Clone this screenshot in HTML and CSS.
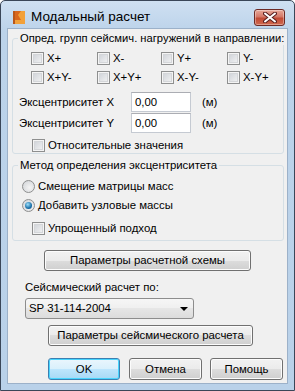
FILE: index.html
```html
<!DOCTYPE html>
<html lang="ru">
<head>
  <meta charset="UTF-8">
  <title>Модальный расчет</title>
  <link rel="stylesheet" href="styles.css">
</head>
<body>
  <div class="window">
    <div class="titlebar">
      <svg class="app-icon" width="14" height="15" viewBox="0 0 14 15">
        <polygon points="1,1 13,1 13,14 1,14" fill="#f2a13a"/>
        <polygon points="1,1 9,1 6,5 9,10 1,10" fill="#d9661c"/>
        <polygon points="1,1 3,1 3,14 1,14" fill="#b9561a"/>
      </svg>
      <span class="title">Модальный расчет</span>
      <div class="close">
        <svg width="14" height="11" viewBox="0 0 14 11">
          <path d="M2 1.5 L12 9.5 M12 1.5 L2 9.5" stroke="#5a2020" stroke-width="4" stroke-linecap="round"/>
          <path d="M2 1.5 L12 9.5 M12 1.5 L2 9.5" stroke="#fff" stroke-width="2" stroke-linecap="round"/>
        </svg>
      </div>
    </div>

    <div class="client">
      <fieldset class="group group-dir">
        <legend>Опред. групп сейсмич. нагружений в направлении:</legend>
        <div class="dir-grid">
          <label class="check"><span class="box"></span>X+</label>
          <label class="check"><span class="box"></span>X-</label>
          <label class="check"><span class="box"></span>Y+</label>
          <label class="check"><span class="box"></span>Y-</label>
          <label class="check"><span class="box"></span>X+Y-</label>
          <label class="check"><span class="box"></span>X+Y+</label>
          <label class="check"><span class="box"></span>X-Y-</label>
          <label class="check"><span class="box"></span>X-Y+</label>
        </div>
        <div class="ecc-row">
          <span class="ecc-label">Эксцентриситет X</span>
          <span class="field">0,00</span>
          <span class="unit">(м)</span>
        </div>
        <div class="ecc-row">
          <span class="ecc-label">Эксцентриситет Y</span>
          <span class="field">0,00</span>
          <span class="unit">(м)</span>
        </div>
        <label class="check check-rel"><span class="box"></span>Относительные значения</label>
      </fieldset>

      <fieldset class="group group-method">
        <legend>Метод определения эксцентриситета</legend>
        <label class="radio"><span class="circle"></span>Смещение матрицы масс</label>
        <label class="radio radio-2"><span class="circle on"></span>Добавить узловые массы</label>
        <label class="check check-simple"><span class="box"></span>Упрощенный подход</label>
      </fieldset>

      <div class="btn btn-scheme">Параметры расчетной схемы</div>
      <div class="combo-label">Сейсмический расчет по:</div>
      <div class="combo">SP 31-114-2004<span class="arrow"></span></div>
      <div class="btn btn-seismic">Параметры сейсмического расчета</div>

      <div class="footer">
        <div class="btn btn-ok">OK</div>
        <div class="btn btn-cancel">Отмена</div>
        <div class="btn btn-help">Помощь</div>
      </div>
    </div>
  </div>
</body>
</html>
```

FILE: styles.css
```css
* { box-sizing: border-box; }
body { margin: 0; font-family: "Liberation Sans", Arial, sans-serif; font-size: 11.4px; color: #000; background: #fff; }

.window { width: 295px; height: 391px; border: 1px solid #3a4658; border-radius: 5px 5px 0 0; background: linear-gradient(#cfe0f2, #bcd3ea 30px, #b9d1e9); display: flex; flex-direction: column; }

.titlebar { height: 27px; display: flex; align-items: flex-start; padding-left: 11px; }
.app-icon { margin-top: 9px; }
.title { margin-left: 5px; margin-top: 8px; font-size: 13.5px; line-height: 16px; color: #000; }
.close { margin-left: auto; margin-right: 9px; margin-top: 8px; width: 31px; height: 17px; border: 1px solid #6d2a25; border-radius: 3px; background: linear-gradient(#e8a899, #d47868 45%, #c14a35 55%, #d06a50); display: flex; align-items: center; justify-content: center; box-shadow: inset 0 0 0 1px rgba(255,255,255,0.35); }

.client { flex: 1; margin: 0 6px 6px; background: #f0f0f0; border: 1px solid #9cb1c9; }

.group { margin: 0 3px 0 4px; padding: 0; border: 1px solid #d5dfe5; border-radius: 3px; min-width: 0; }
.group legend { margin-left: 5px; padding: 0 2px; line-height: 13px; height: 13px; white-space: nowrap; }
.group-dir legend { font-size: 11.2px; }
.group-dir { margin-top: 3px; padding-bottom: 1px; }
.group-method { margin-top: 5px; padding-bottom: 5px; }

.check, .radio { display: flex; align-items: center; height: 13px; line-height: 13px; white-space: nowrap; }
.box { width: 13px; height: 13px; margin-right: 3px; border: 1px solid #8e8f8f; background: linear-gradient(135deg, #cbcfd5, #f6f6f6); box-shadow: inset 0 0 0 1px #f4f4f4, inset 0 0 0 2px #d4d6d9; }
.circle { width: 13px; height: 13px; margin-right: 3px; border: 1px solid #8e8f8f; border-radius: 50%; background: radial-gradient(circle at 60% 60%, #f4f4f4, #cfd2d6); position: relative; }
.circle.on::after { content: ""; position: absolute; left: 2px; top: 2px; width: 7px; height: 7px; border-radius: 50%; background: radial-gradient(circle at 40% 35%, #9ee0fb, #1a6fa8 60%, #0d4e82); }

.dir-grid { display: grid; grid-template-columns: 66px 64px 66px auto; row-gap: 6px; margin: 7px 0 0 18px; }

.ecc-row { display: flex; align-items: center; height: 20px; margin-left: 6px; }
.ecc-row + .ecc-row { margin-top: 1px; }
.group-dir .dir-grid + .ecc-row { margin-top: 8px; }
.ecc-label { width: 112px; }
.field { width: 60px; height: 20px; line-height: 18px; padding-left: 3px; background: #fff; border: 1px solid #c5cad2; border-top-color: #abadb3; }
.unit { margin-left: 11px; }
.check-rel { margin: 6px 0 0 19px; }

.radio { margin: 8px 0 0 9px; }
.radio-2 { margin-top: 6px; }
.radio .circle { margin-right: 3px; }
.check-simple { margin: 10px 0 0 19px; }

.btn { height: 21px; line-height: 19px; text-align: center; border: 1px solid #707070; border-radius: 3px; background: linear-gradient(#f2f2f2, #ebebeb 50%, #dddddd 50%, #cfcfcf); box-shadow: inset 0 0 0 1px #fcfcfc; }
.btn-scheme { margin: 9px 0 0 36px; width: 207px; }
.combo-label { margin: 10px 0 0 17px; line-height: 13px; }
.combo { margin: 4px 0 0 17px; width: 169px; height: 21px; line-height: 19px; padding-left: 3px; border: 1px solid #8d8d8d; border-radius: 3px; background: linear-gradient(#f6f6f6, #efefef 50%, #e6e6e6 50%, #dcdcdc); display: flex; align-items: center; }
.arrow { margin-left: auto; margin-right: 5px; width: 0; height: 0; border-left: 4px solid transparent; border-right: 4px solid transparent; border-top: 4px solid #000; }
.btn-seismic { margin: 6px 0 0 40px; width: 205px; }

.footer { display: flex; margin: 12px 0 0 40px; }
.footer .btn { height: 22px; line-height: 20px; width: 73px; }
.btn-ok { width: 72px !important; border-color: #3c7fb1; background: linear-gradient(#eaf6fd, #d9f0fc 50%, #bee6fd 50%, #a7d9f5); box-shadow: inset 0 0 0 1px #48d5fe; }
.btn-cancel { margin-left: 9px; }
.btn-help { margin-left: 8px; }
```
